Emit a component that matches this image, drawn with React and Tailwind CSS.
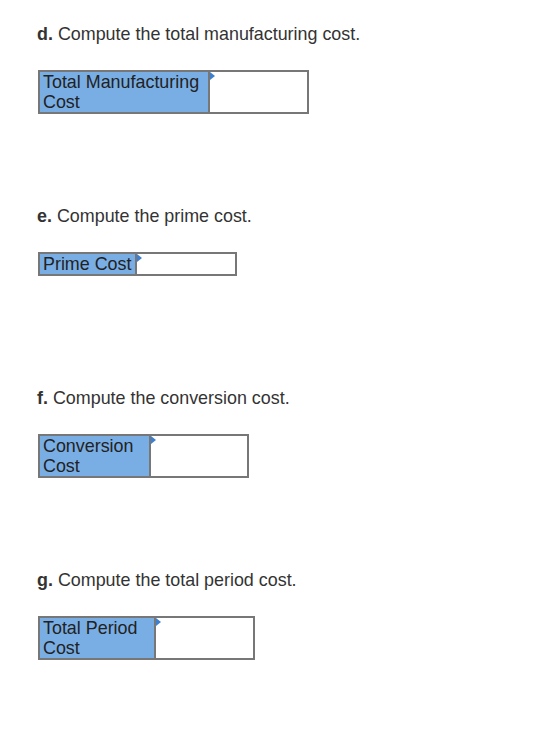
const sections = [
  { letter: 'd.', text: 'Compute the total manufacturing cost.', label: ['Total Manufacturing', 'Cost'], labelW: 'w-[170px]', inputW: 'w-[97px]' },
  { letter: 'e.', text: 'Compute the prime cost.', label: ['Prime Cost'], labelW: 'w-[97px]', inputW: 'w-[98px]' },
  { letter: 'f.', text: 'Compute the conversion cost.', label: ['Conversion', 'Cost'], labelW: 'w-[111px]', inputW: 'w-[96px]' },
  { letter: 'g.', text: 'Compute the total period cost.', label: ['Total Period', 'Cost'], labelW: 'w-[116px]', inputW: 'w-[97px]' },
];

function AnswerRow({ label, labelW, inputW }) {
  return (
    <div className="inline-flex border-2 border-[#777777] bg-white">
      <div className={`${labelW} shrink-0 bg-[#79aee5] pl-[3px] text-[17.9px] leading-[20px] text-[#222222] border-r-2 border-[#777777]`}>
        {label.map((l) => (
          <div key={l}>{l}</div>
        ))}
      </div>
      <div className={`relative ${inputW}`}>
        {/* little blue marker in the input cell corner */}
        <span className="absolute left-0 top-0 h-0 w-0 border-y-[4px] border-l-[5px] border-y-transparent border-l-[#3d7fd0]" />
      </div>
    </div>
  );
}

export default function App() {
  return (
    <div className="min-h-[754px] w-[540px] bg-white px-[37px] pt-[24px] text-[#333333]" style={{ fontFamily: '"Liberation Sans", Arial, sans-serif' }}>
      {sections.map((s) => (
        <div key={s.letter} className="h-[182px]">
          <p className="text-[17.9px] leading-[20px]">
            <b>{s.letter}</b> {s.text}
          </p>
          <div className="mt-[26px] pl-[1px]">
            <AnswerRow label={s.label} labelW={s.labelW} inputW={s.inputW} />
          </div>
        </div>
      ))}
    </div>
  );
}
